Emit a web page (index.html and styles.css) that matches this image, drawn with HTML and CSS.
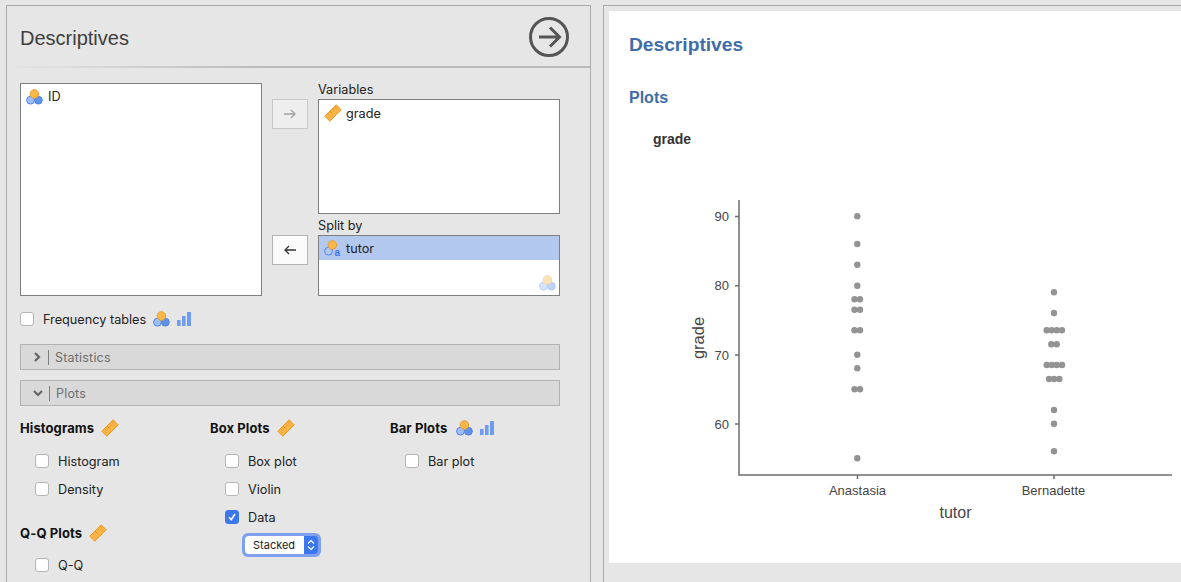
FILE: index.html
```html
<!DOCTYPE html>
<html lang="en">
<head>
  <meta charset="UTF-8" />
  <title>Descriptives</title>
  <link rel="stylesheet" href="styles.css">
</head>
<body>
  <!-- shared variable type icons -->
  <svg class="defs" width="0" height="0">
    <symbol id="nominal" viewBox="0 0 17 16">
      <circle cx="4.500" cy="11.200" r="3.900" fill="#9dbff5" stroke="#4f86e8" />
      <circle cx="12.400" cy="11.200" r="3.900" fill="#5f92ea" stroke="#4f86e8" />
      <circle cx="8.400" cy="5" r="4.300" fill="#f8b84e" stroke="#e69d2c" />
    </symbol>
    <symbol id="ruler" viewBox="0 0 18 18">
      <polygon points="0.800,12.200 12.200,0.800 17.200,5.800 5.800,17.200" fill="#f9b445" stroke="#eb9c25" />
      <path d="M3.600 9.400l1.600 1.600M6 7l2.200 2.200M8.400 4.600l1.600 1.600M10.800 2.200l2.200 2.200" stroke="#e39320" fill="none" />
    </symbol>
    <symbol id="bars" viewBox="0 0 14 14">
      <rect x="0" y="8" width="3.600" height="6" fill="#6f9cf0" />
      <rect x="5" y="4" width="3.600" height="10" fill="#6f9cf0" />
      <rect x="10" y="0" width="4" height="14" fill="#6f9cf0" />
    </symbol>
  </svg>

  <div class="page">
    <section class="options">
      <header class="options-head">
        <h2>Descriptives</h2>
        <svg class="go" width="40" height="40" viewBox="0 0 40 40">
          <circle cx="20" cy="20" r="18.500" fill="none" stroke="#555" stroke-width="3" />
          <path d="M10 20h20M21 10.500l9.500 9.500-9.500 9.500" fill="none" stroke="#555" stroke-width="3" />
        </svg>
      </header>

      <div class="options-body">
        <div class="selector">
          <div class="list list-all">
            <div class="var">
              <svg class="icon-nom"><use href="#nominal" /></svg>
              <span>ID</span>
            </div>
          </div>

          <div class="target">
            <div class="target-row">
              <button class="move move-off">
                <svg width="12" height="10" viewBox="0 0 12 10"><path d="M0 5h11M7 1l4 4-4 4" fill="none" stroke="#a3a3a3" stroke-width="1.300" /></svg>
              </button>
              <div class="target-col">
                <div class="target-label">Variables</div>
                <div class="list list-vars">
                  <div class="var">
                    <svg class="icon-ruler"><use href="#ruler" /></svg>
                    <span>grade</span>
                  </div>
                </div>
              </div>
            </div>

            <div class="target-row">
              <button class="move">
                <svg width="12" height="10" viewBox="0 0 12 10"><path d="M12 5H1M5 1L1 5l4 4" fill="none" stroke="#333" stroke-width="1.300" /></svg>
              </button>
              <div class="target-col">
                <div class="target-label">Split by</div>
                <div class="list list-split">
                  <div class="var var-selected">
                    <svg class="icon-nom" viewBox="0 0 17 16">
                      <circle cx="4.500" cy="11.200" r="3.900" fill="none" stroke="#4f86e8" />
                      <circle cx="8.400" cy="5" r="4.300" fill="#f8b84e" stroke="#e69d2c" />
                      <text class="icon-a" x="10.500" y="15.500">a</text>
                    </svg>
                    <span>tutor</span>
                  </div>
                  <svg class="icon-nom icon-faded"><use href="#nominal" /></svg>
                </div>
              </div>
            </div>
          </div>
        </div>

        <div class="freq">
          <label class="check"><span class="box"></span>Frequency tables</label>
          <svg class="icon-nom"><use href="#nominal" /></svg>
          <svg class="icon-bars"><use href="#bars" /></svg>
        </div>

        <div class="fold">
          <svg class="chev" width="9" height="10" viewBox="0 0 9 10"><path d="M2 1l4 4-4 4" fill="none" stroke="#666" stroke-width="2.200" /></svg>
          <span>Statistics</span>
        </div>
        <div class="fold">
          <svg class="chev" width="10" height="10" viewBox="0 0 10 10"><path d="M1 3l4 4 4-4" fill="none" stroke="#666" stroke-width="2.200" /></svg>
          <span>Plots</span>
        </div>

        <div class="plot-options">
          <div class="col col-hist">
            <h4>Histograms <svg class="icon-ruler"><use href="#ruler" /></svg></h4>
            <div class="checks">
              <label class="check"><span class="box"></span>Histogram</label>
              <label class="check"><span class="box"></span>Density</label>
            </div>
            <h4 class="qq-head">Q-Q Plots <svg class="icon-ruler"><use href="#ruler" /></svg></h4>
            <div class="checks">
              <label class="check"><span class="box"></span>Q-Q</label>
            </div>
          </div>

          <div class="col col-box">
            <h4>Box Plots <svg class="icon-ruler"><use href="#ruler" /></svg></h4>
            <div class="checks">
              <label class="check"><span class="box"></span>Box plot</label>
              <label class="check"><span class="box"></span>Violin</label>
              <label class="check"><span class="box box-on">
                <svg width="10" height="10" viewBox="0 0 10 10"><path d="M2 5.300l2.200 2.400L8 2" fill="none" stroke="#fff" stroke-width="1.600" /></svg>
              </span>Data</label>
            </div>
            <div class="dropdown">
              <span class="dropdown-text">Stacked</span>
              <span class="dropdown-arrows">
                <svg width="8" height="12" viewBox="0 0 8 12"><path d="M1 4.500L4 1.500l3 3M1 7.500l3 3 3-3" fill="none" stroke="#fff" stroke-width="1.200" /></svg>
              </span>
            </div>
          </div>

          <div class="col col-bar">
            <h4>Bar Plots <svg class="icon-nom"><use href="#nominal" /></svg> <svg class="icon-bars"><use href="#bars" /></svg></h4>
            <div class="checks">
              <label class="check"><span class="box"></span>Bar plot</label>
            </div>
          </div>
        </div>
      </div>
    </section>

    <section class="results">
      <div class="sheet">
        <h1>Descriptives</h1>
        <h2>Plots</h2>
        <h3>grade</h3>
        <svg class="chart" width="572" height="373" viewBox="609 190 572 373">
          <g class="axes">
            <path d="M739 200V475H1172" />
            <path d="M735 216.500h4M735 285.700h4M735 355h4M735 424h4M857.500 475v4M1054 475v4" />
          </g>
          <g class="tick-y">
            <text x="729" y="221">90</text>
            <text x="729" y="290">80</text>
            <text x="729" y="359.500">70</text>
            <text x="729" y="428.500">60</text>
          </g>
          <g class="tick-x">
            <text x="857.500" y="495">Anastasia</text>
            <text x="1053.500" y="495">Bernadette</text>
          </g>
          <text class="title-x" x="955.500" y="518">tutor</text>
          <text class="title-y" transform="translate(704 338) rotate(-90)">grade</text>
          <g class="dots">
            <!-- Anastasia -->
            <circle cx="857.300" cy="216.300" r="3.200" />
            <circle cx="857.300" cy="244" r="3.200" />
            <circle cx="857.300" cy="264.700" r="3.200" />
            <circle cx="857.300" cy="285.700" r="3.200" />
            <circle cx="854.500" cy="299.300" r="3.200" />
            <circle cx="860" cy="299.300" r="3.200" />
            <circle cx="854.500" cy="309.700" r="3.200" />
            <circle cx="860" cy="309.700" r="3.200" />
            <circle cx="854.500" cy="330.300" r="3.200" />
            <circle cx="860" cy="330.300" r="3.200" />
            <circle cx="857.300" cy="354.700" r="3.200" />
            <circle cx="857.300" cy="368.300" r="3.200" />
            <circle cx="854.500" cy="389.300" r="3.200" />
            <circle cx="860" cy="389.300" r="3.200" />
            <circle cx="857.300" cy="458.300" r="3.200" />
            <!-- Bernadette -->
            <circle cx="1054" cy="292.300" r="3.200" />
            <circle cx="1054" cy="313" r="3.200" />
            <circle cx="1046.700" cy="330.300" r="3.200" />
            <circle cx="1051.700" cy="330.300" r="3.200" />
            <circle cx="1056.700" cy="330.300" r="3.200" />
            <circle cx="1062" cy="330.300" r="3.200" />
            <circle cx="1051.300" cy="344.300" r="3.200" />
            <circle cx="1056.700" cy="344.300" r="3.200" />
            <circle cx="1046.700" cy="365" r="3.200" />
            <circle cx="1051.700" cy="365" r="3.200" />
            <circle cx="1056.700" cy="365" r="3.200" />
            <circle cx="1062" cy="365" r="3.200" />
            <circle cx="1049" cy="379" r="3.200" />
            <circle cx="1054" cy="379" r="3.200" />
            <circle cx="1059.300" cy="379" r="3.200" />
            <circle cx="1054" cy="410" r="3.200" />
            <circle cx="1054" cy="423.700" r="3.200" />
            <circle cx="1054" cy="451.300" r="3.200" />
          </g>
        </svg>
      </div>
    </section>
  </div>
</body>
</html>
```

FILE: styles.css
```css
* {
  box-sizing: border-box;
}

html, body {
  margin: 0;
  height: 582px;
  overflow: hidden;
}

body {
  background: #e6e6e6;
  color: #222;
  font-family: Inter, "Liberation Sans", sans-serif;
  font-size: 12.7px;
}

.defs {
  display: block;
  height: 0;
}

.page {
  display: flex;
  gap: 12px;
  width: 1181px;
  height: 582px;
  padding: 5px 0 0 6px;
}

/* options panel, both panels run off the bottom of the window */
.options {
  flex: 0 0 585px;
  border: 1px solid #aaa;
  border-bottom: 0;
  background: #e6e6e6;
}

.options-head {
  display: flex;
  align-items: center;
  justify-content: space-between;
  height: 62px;
  padding: 2px 21px 0 13px;
  border-bottom: 2px solid;
  border-image: linear-gradient(to right, #e6e6e6, #b9b9b9 45%) 1;
}

.options-head h2 {
  margin: 2px 0 0;
  font-family: "Liberation Sans", sans-serif;
  font-size: 20px;
  font-weight: 400;
  color: #3e3e3e;
}

.options-body {
  padding: 15px 0 0 13px;
  width: 553px;
}

.selector {
  display: flex;
  gap: 10px;
}

.list {
  background: #fff;
  border: 1px solid #7f7f7f;
  padding-top: 1px;
}

.list-all {
  flex: 0 0 242px;
  height: 213px;
}

.list-all .var {
  height: 23px;
}

.target {
  display: flex;
  flex-direction: column;
  gap: 5px;
  flex: 1;
}

.target-row {
  display: flex;
  gap: 10px;
}

.target-col {
  width: 242px;
}

.target-label {
  height: 16px;
  line-height: 13px;
}

.list-vars {
  height: 115px;
}

.list-split {
  position: relative;
  height: 61px;
  padding-top: 0;
}

.list-split .icon-faded {
  position: absolute;
  right: 3px;
  bottom: 4px;
  opacity: 0.4;
}

.move {
  display: flex;
  align-items: center;
  justify-content: center;
  width: 36px;
  height: 30px;
  margin-top: 16px;
  padding: 0;
  background: #fbfbfb;
  border: 1px solid #b4b4b4;
}

.move-off {
  background: #eeeeee;
  border-color: #c9c9c9;
}

.var {
  display: flex;
  align-items: center;
  gap: 5px;
  height: 24px;
  padding-left: 5px;
}

.var .icon-ruler {
  margin-right: -1px;
}

.var-selected {
  background: #b3c8ee;
}

.icon-nom {
  width: 17px;
  height: 16px;
  flex: none;
  overflow: visible;
}

.icon-ruler {
  width: 18px;
  height: 18px;
  flex: none;
}

.icon-bars {
  width: 14px;
  height: 14px;
  flex: none;
}

.icon-a {
  font-family: "Liberation Sans", sans-serif;
  font-size: 10px;
  font-weight: 700;
  fill: #3c78ec;
}

.freq {
  display: flex;
  align-items: center;
  gap: 7px;
  height: 16px;
  margin-top: 15px;
}

.check {
  display: flex;
  align-items: center;
  gap: 9px;
  height: 16px;
}

.box {
  display: flex;
  align-items: center;
  justify-content: center;
  width: 14px;
  height: 14px;
  background: #fff;
  border: 1px solid #b5b5b5;
  border-radius: 3px;
}

.box-on {
  background: #3b78f0;
  border-color: #3b78f0;
}

.fold {
  display: flex;
  align-items: center;
  height: 26px;
  margin-top: 10px;
  background: #d9d9d9;
  border: 1px solid #b2b2b2;
  color: #6e6e6e;
  font-size: 12.5px;
  letter-spacing: 0.2px;
}

.freq + .fold {
  margin-top: 17px;
}

.chev {
  margin-left: 12px;
}

.fold span {
  margin-left: 6px;
  padding-left: 6px;
  border-left: 1px solid #7d7d7d;
  line-height: 15px;
}

/* plot checkboxes, three columns */
.plot-options {
  display: grid;
  grid-template-columns: 190px 180px 1fr;
  margin-top: 13px;
}

.col h4 {
  display: flex;
  align-items: center;
  gap: 7px;
  height: 18px;
  margin: 0;
  font-size: 13px;
  font-weight: 700;
  letter-spacing: 0.1px;
  color: #111;
}

.col-bar .icon-nom {
  margin-left: 2px;
}

.checks {
  display: flex;
  flex-direction: column;
  gap: 12px;
  margin-top: 16px;
  padding-left: 15px;
}

.col .qq-head {
  margin-top: 27px;
}

.qq-head + .checks {
  margin-top: 15px;
}

.dropdown {
  display: flex;
  width: 79px;
  height: 24px;
  margin: 8px 0 0 32px;
  padding: 3px;
  background: #7f9ff0;
  border-radius: 6px;
}

.dropdown-text {
  flex: 1;
  padding-left: 8px;
  background: #fff;
  border-radius: 4px 0 0 4px;
  font-size: 11px;
  line-height: 19px;
}

.dropdown-arrows {
  display: flex;
  align-items: center;
  justify-content: center;
  width: 14px;
  background: #3b78f0;
  border-radius: 0 4px 4px 0;
}

/* results panel */
.results {
  flex: 1;
  padding: 5px 0 0 5px;
  border: 1px solid #aaa;
  border-width: 1px 0 0 1px;
  background: #e6e6e6;
}

.sheet {
  position: relative;
  height: 552px;
  padding: 1px 20px;
  background: #fff;
}

.sheet h1 {
  margin: 22px 0 0;
  font-family: "Liberation Sans", sans-serif;
  font-size: 19.2px;
  line-height: 22px;
  color: #3e6da9;
}

.sheet h2 {
  margin: 33px 0 0;
  font-family: "Liberation Sans", sans-serif;
  font-size: 16px;
  line-height: 18px;
  color: #3e6da9;
}

.sheet h3 {
  margin: 24px 0 0 24px;
  font-family: "Liberation Sans", sans-serif;
  font-size: 14px;
  line-height: 16px;
  color: #333;
}

.chart {
  position: absolute;
  left: 0;
  top: 179px;
}

.axes path {
  fill: none;
  stroke: #6e6e6e;
  stroke-width: 1.5;
}

.chart text {
  font-family: "Liberation Sans", sans-serif;
  fill: #454545;
}

.tick-y text {
  font-size: 13px;
  text-anchor: end;
}

.tick-x text {
  font-size: 13px;
  text-anchor: middle;
}

.title-x {
  font-size: 16px;
  text-anchor: middle;
}

.title-y {
  font-size: 16.5px;
  text-anchor: middle;
}

.dots circle {
  fill: #939393;
}
```
